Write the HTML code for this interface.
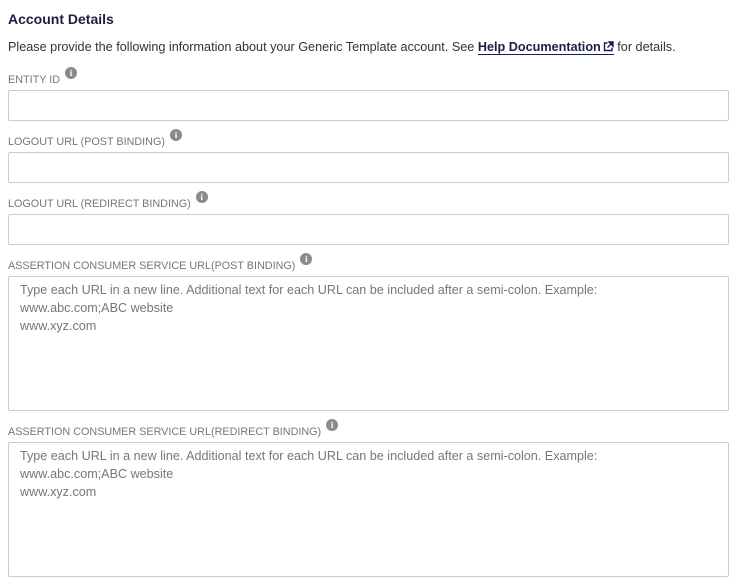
<!DOCTYPE html>
<html><head><style>
body{margin:0;width:737px;height:585px;background:#fff;font-family:"Liberation Sans",Arial,sans-serif;position:relative;overflow:hidden}
.a{position:absolute;white-space:nowrap}
h1{position:absolute;left:8px;top:11px;margin:0;font-size:14px;font-weight:bold;color:#1b1f45}
.d{left:8px;top:40px;font-size:12.65px;color:#333}
.d b{color:#1b1f45;border-bottom:1px solid #1b1f45}
.l{left:8px;font-size:10.8px;color:#777}
.i{display:inline-block;width:12px;height:12px;border-radius:50%;background:#8a8a8a;color:#fff;font-size:9px;font-weight:bold;text-align:center;line-height:12px;vertical-align:top;margin-left:5px;margin-top:-7px;font-family:"Liberation Serif",serif}
.b{position:absolute;left:8px;width:721px;border:1px solid #ccc;border-radius:2px;box-sizing:border-box}
.t{padding:4px 11px;font-size:12.6px;line-height:18px;color:#777}
</style></head><body>
<h1>Account Details</h1>
<div class="a d">Please provide the following information about your Generic Template account. See <b>Help Documentation<svg width="11" height="11" viewBox="0 0 11 11" style="vertical-align:-1px;margin-left:2px"><path d="M4.5 2H1.5v7.5H9V6.5" fill="none" stroke="#1b1f45" stroke-width="1.4"/><path d="M6 1h4v4z M9.5 1.5 4.5 6.5" fill="#1b1f45" stroke="#1b1f45" stroke-width="1.4"/></svg></b> for details.</div>
<div class="a l" style="top:74px">ENTITY ID<span class="i">i</span></div>
<div class="b" style="top:90px;height:31px"></div>
<div class="a l" style="top:136px">LOGOUT URL (POST BINDING)<span class="i">i</span></div>
<div class="b" style="top:152px;height:31px"></div>
<div class="a l" style="top:198px">LOGOUT URL (REDIRECT BINDING)<span class="i">i</span></div>
<div class="b" style="top:214px;height:31px"></div>
<div class="a l" style="top:260px">ASSERTION CONSUMER SERVICE URL(POST BINDING)<span class="i">i</span></div>
<div class="b t" style="top:276px;height:135px">Type each URL in a new line. Additional text for each URL can be included after a semi-colon. Example:<br>www.abc.com;ABC website<br>www.xyz.com</div>
<div class="a l" style="top:426px">ASSERTION CONSUMER SERVICE URL(REDIRECT BINDING)<span class="i">i</span></div>
<div class="b t" style="top:442px;height:135px">Type each URL in a new line. Additional text for each URL can be included after a semi-colon. Example:<br>www.abc.com;ABC website<br>www.xyz.com</div>
</body></html>
